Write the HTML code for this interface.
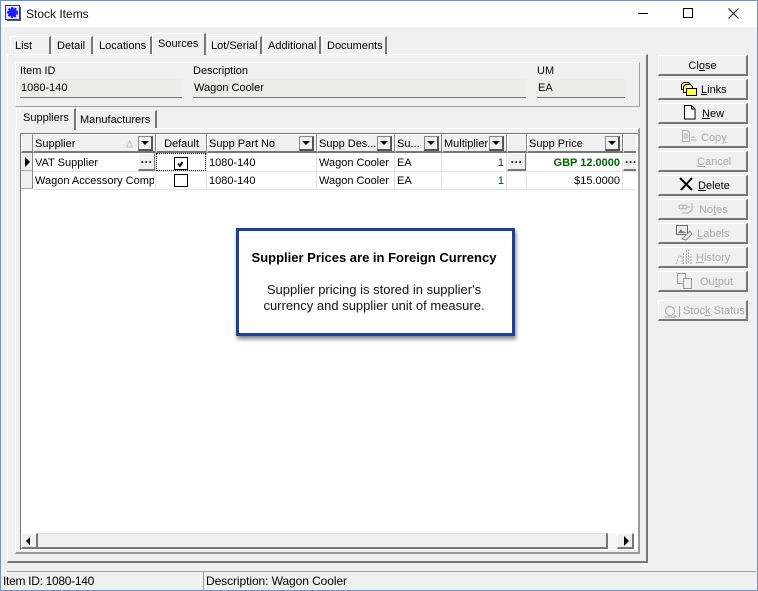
<!DOCTYPE html>
<html><head><meta charset="utf-8"><style>
html,body{margin:0;padding:0;background:#f0f0f0}
#w{position:relative;width:758px;height:591px;overflow:hidden;background:#f0f0f0;font:11px/14px "Liberation Sans",sans-serif;color:#000}
#w div,#w span.a,#w svg{position:absolute}
.t{white-space:nowrap}
.tab{background:#f0f0f0;border-top:1px solid #fff;border-left:1px solid #fff;border-right:2px solid #777;box-sizing:border-box;white-space:nowrap;line-height:19px}
.btn{left:658px;width:90px;height:21px;box-sizing:border-box;background:#f0f0f0;border-top:1px solid #fff;border-left:1px solid #fff;border-right:2px solid #777;border-bottom:2px solid #777;text-align:center;line-height:20px;white-space:nowrap}
.dis{color:#a8a8a8}
.hd{top:134px;height:19px;box-sizing:border-box;background:#f0f0f0;border-top:1px solid #fff;border-left:1px solid #fff;border-right:1px solid #888;border-bottom:2px solid #777;line-height:18px;padding-left:1px;white-space:nowrap;overflow:hidden}
.dd{top:136px;width:15px;height:15px;box-sizing:border-box;background:#f0f0f0;border:1px solid #888;border-right:2px solid #555;border-bottom:2px solid #555}
.dd:after{content:"";position:absolute;left:2px;top:4px;border-left:4px solid transparent;border-right:4px solid transparent;border-top:4px solid #000}
.c{height:18px;line-height:20px;white-space:nowrap;overflow:hidden}
.r{text-align:right}
.vl{width:1px;top:153px;height:36px;background:#e4e4e4}
.hl{left:33px;width:603px;height:1px;background:#e4e4e4}
.dots{width:19px;height:18px;box-sizing:border-box;background:#f0f0f0;border-right:1px solid #777;border-bottom:2px solid #777;border-top:1px solid #fff;border-left:1px solid #fff;text-align:center;font-weight:bold;line-height:10px;font-size:12px;letter-spacing:.6px}
u{text-decoration:underline}
</style></head><body><div id="w">

<div style="left:0;top:0;width:758px;height:27px;background:#fff"></div>
<div style="left:0;top:0;width:758px;height:1px;background:#6b95c8"></div>
<div style="left:0;top:0;width:1px;height:591px;background:#6b95c8"></div>
<div style="left:757px;top:0;width:1px;height:591px;background:#6b95c8"></div>
<div style="left:0;top:590px;width:758px;height:1px;background:#6b95c8"></div>

<svg style="left:5px;top:5px" width="16" height="16" viewBox="0 0 16 16"><rect x=".5" y=".5" width="14" height="14" fill="#e8ecff" stroke="#2a2ad0"/><path d="M15.500 2v13.500H2" stroke="#555" fill="none"/><circle cx="7.500" cy="7.500" r="4.500" fill="#1c1cff" stroke="#1c1cff" stroke-dasharray="2 1.300" stroke-width="2"/></svg>
<div class="t" style="left:26px;top:7px;font-size:12px;color:#111">Stock Items</div>
<div style="left:638px;top:13px;width:10px;height:1px;background:#000"></div>
<div style="left:683px;top:8px;width:10px;height:10px;box-sizing:border-box;border:1px solid #000"></div>
<svg style="left:728px;top:8px" width="11" height="11" viewBox="0 0 11 11"><path d="M.5.500l10 10M10.500.500l-10 10" stroke="#111" fill="none"/></svg>

<!-- main panel -->
<div style="left:7px;top:54px;width:641px;height:509px;box-sizing:border-box;border-top:1px solid #fff;border-left:1px solid #fff;border-right:2px solid #777;border-bottom:2px solid #777"></div>

<!-- top tabs -->
<div class="tab" style="left:10px;top:36px;width:41px;height:18px;padding-left:4px">List</div>
<div class="tab" style="left:53px;top:36px;width:40px;height:18px;padding-left:3px">Detail</div>
<div class="tab" style="left:94px;top:36px;width:58px;height:18px;padding-left:4px">Locations</div>
<div class="tab" style="left:152px;top:33px;width:54px;height:22px;line-height:20px;z-index:2;padding-left:5px">Sources</div>
<div class="tab" style="left:207px;top:36px;width:55px;height:18px;padding-left:3px">Lot/Serial</div>
<div class="tab" style="left:263px;top:36px;width:58px;height:18px;padding-left:4px">Additional</div>
<div class="tab" style="left:322px;top:36px;width:65px;height:18px;padding-left:4px">Documents</div>

<!-- header group -->
<div style="left:15px;top:62px;width:625px;height:45px;box-sizing:border-box;border:1px solid #fff;border-right:1px solid #a0a0a0;border-bottom:1px solid #a0a0a0"></div>
<div class="t" style="left:20px;top:64px">Item ID</div>
<div class="t" style="left:193px;top:64px">Description</div>
<div class="t" style="left:537px;top:64px">UM</div>
<div class="t" style="left:20px;top:79px;width:162px;height:19px;box-sizing:border-box;background:#ececea;border-bottom:1px solid #777;padding-left:1px;line-height:18px">1080-140</div>
<div class="t" style="left:193px;top:79px;width:333px;height:19px;box-sizing:border-box;background:#ececea;border-bottom:1px solid #777;padding-left:1px;line-height:18px">Wagon Cooler</div>
<div class="t" style="left:537px;top:79px;width:88px;height:19px;box-sizing:border-box;background:#ececea;border-bottom:1px solid #777;padding-left:1px;line-height:18px">EA</div>

<!-- inner panel -->
<div style="left:15px;top:128px;width:625px;height:426px;box-sizing:border-box;border-top:1px solid #fff;border-left:1px solid #fff;border-right:2px solid #999;border-bottom:2px solid #999"></div>
<div class="tab" style="left:16px;top:108px;width:60px;height:22px;line-height:19px;z-index:2;padding-left:6px">Suppliers</div>
<div class="tab" style="left:76px;top:110px;width:81px;height:18px;line-height:18px;padding-left:3px">Manufacturers</div>

<!-- grid -->
<div style="left:20px;top:133px;width:618px;height:417px;box-sizing:border-box;background:#fff;border-top:1px solid #777;border-left:1px solid #777"></div>
<div style="left:21px;top:134px;width:615px;height:19px;background:#f0f0f0"></div>

<div class="hd" style="left:21px;width:12px"></div>
<div class="hd" style="left:33px;width:123px">Supplier</div>
<div class="hd" style="left:156px;width:51px;text-align:center;padding:0">Default</div>
<div class="hd" style="left:207px;width:110px">Supp Part No</div>
<div class="hd" style="left:317px;width:78px">Supp Des...</div>
<div class="hd" style="left:395px;width:47px">Su...</div>
<div class="hd" style="left:442px;width:65px">Multiplier</div>
<div class="hd" style="left:507px;width:20px"></div>
<div class="hd" style="left:527px;width:96px">Supp Price</div>
<div class="hd" style="left:623px;width:13px;border-right:0"></div>
<svg style="left:126px;top:140px" width="7" height="8" viewBox="0 0 7 8"><path d="M3.500 1L.5 7h6z" fill="none" stroke="#c4c4c4"/></svg>
<div class="dd" style="left:138px"></div>
<div class="dd" style="left:299px"></div>
<div class="dd" style="left:377px"></div>
<div class="dd" style="left:424px"></div>
<div class="dd" style="left:489px"></div>
<div class="dd" style="left:605px"></div>

<!-- row grid -->
<div class="hl" style="top:171px"></div>
<div class="hl" style="top:189px"></div>
<div class="vl" style="left:155px"></div>
<div class="vl" style="left:206px"></div>
<div class="vl" style="left:316px"></div>
<div class="vl" style="left:394px"></div>
<div class="vl" style="left:441px"></div>
<div class="vl" style="left:506px"></div>
<div class="vl" style="left:526px"></div>
<div class="vl" style="left:622px"></div>

<div style="left:21px;top:153px;width:12px;height:18px;box-sizing:border-box;background:#f0f0f0;border-right:1px solid #888;border-bottom:1px solid #aaa"></div>
<div style="left:21px;top:171px;width:12px;height:18px;box-sizing:border-box;background:#f0f0f0;border-right:1px solid #888;border-bottom:1px solid #aaa"></div>
<div style="left:25px;top:157px;width:0;height:0;border-left:5px solid #000;border-top:5px solid transparent;border-bottom:5px solid transparent"></div>

<div class="c" style="left:35px;top:153px;width:104px">VAT Supplier</div>
<div class="dots" style="left:138px;top:153px;width:17px">...</div>
<div class="c" style="left:35px;top:171px;width:119px">Wagon Accessory Company</div>

<div style="left:156px;top:153px;width:50px;height:18px;box-sizing:border-box;border:1px dotted #000"></div>
<div style="left:174px;top:157px;width:14px;height:13px;box-sizing:border-box;border:1px solid #000;background:#fff"></div>
<svg style="left:175px;top:158px" width="12" height="11" viewBox="0 0 12 11"><path d="M3 5.500l2 2.500 2.500-4" stroke="#000" stroke-width="1.800" fill="none"/></svg>
<div style="left:174px;top:174px;width:14px;height:13px;box-sizing:border-box;border:1px solid #000;background:#fff"></div>

<div class="c" style="left:209px;top:153px">1080-140</div>
<div class="c" style="left:209px;top:171px">1080-140</div>
<div class="c" style="left:319px;top:153px">Wagon Cooler</div>
<div class="c" style="left:319px;top:171px">Wagon Cooler</div>
<div class="c" style="left:397px;top:153px">EA</div>
<div class="c" style="left:397px;top:171px">EA</div>
<div class="c r" style="left:442px;top:153px;width:62px;color:#004400">1</div>
<div class="c r" style="left:442px;top:171px;width:62px;color:#004400">1</div>
<div class="dots" style="left:507px;top:153px">...</div>
<div class="c r" style="left:527px;top:153px;width:93px;color:#006400;font-weight:bold">GBP 12.0000</div>
<div class="c r" style="left:527px;top:171px;width:93px">$15.0000</div>
<div class="dots" style="left:623px;top:153px;width:13px;text-align:left;padding-left:1px;border-right:0;overflow:hidden">...</div>

<!-- scrollbar -->
<div style="left:21px;top:533px;width:17px;height:16px;box-sizing:border-box;background:#f0f0f0;border-top:1px solid #fff;border-left:1px solid #fff;border-right:2px solid #777;border-bottom:2px solid #777"></div>
<div style="left:26px;top:537px;width:0;height:0;border-right:4px solid #000;border-top:4px solid transparent;border-bottom:4px solid transparent"></div>
<div style="left:38px;top:533px;width:570px;height:16px;box-sizing:border-box;background:#f0f0f0;border-top:1px solid #e2e2e2;border-right:2px solid #777;border-bottom:2px solid #777"></div>
<div style="left:608px;top:533px;width:9px;height:16px;background:#f6f6f6"></div>
<div style="left:617px;top:533px;width:17px;height:16px;box-sizing:border-box;background:#f0f0f0;border-top:1px solid #fff;border-left:1px solid #fff;border-right:2px solid #777;border-bottom:2px solid #777"></div>
<div style="left:624px;top:536px;width:0;height:0;border-left:5px solid #000;border-top:5px solid transparent;border-bottom:5px solid transparent"></div>

<!-- callout -->
<div style="left:236px;top:228px;width:279px;height:108px;box-sizing:border-box;background:#fff;border:3px solid #1f3f97;box-shadow:1px 3px 4px rgba(0,0,0,.5);z-index:3;text-align:center;font-size:13px;line-height:16px;color:#111">
<span class="a" style="left:0;right:3px;top:19px;font-weight:bold;color:#000">Supplier Prices are in Foreign Currency</span>
<span class="a" style="left:0;right:3px;top:51px">Supplier pricing is stored in supplier's<br>currency and supplier unit of measure.</span>
</div>

<!-- buttons -->
<div class="btn" style="top:55px">Cl<u>o</u>se</div>
<div class="btn" style="top:79px;text-align:left;padding-left:42px"><u>L</u>inks</div>
<svg style="left:680px;top:81px" width="18" height="16" viewBox="0 0 18 16"><path d="M1.500 3.500l2-2h5l2 2v5h-9z" fill="#ffff90" stroke="#000"/><path d="M3.500 5.500l2-2h5l2 2v6h-9z" fill="#ffff90" stroke="#000"/><path d="M6.500 7.500h10v7h-10z" fill="#ffff40" stroke="#000"/></svg>
<div class="btn" style="top:103px;text-align:left;padding-left:43px"><u>N</u>ew</div>
<svg style="left:684px;top:105px" width="12" height="15" viewBox="0 0 12 15"><path d="M.5.500h7l3.500 3.500v10H.5z" fill="#fff" stroke="#000"/><path d="M7.500.500v3.500H11" fill="none" stroke="#000"/></svg>
<div class="btn dis" style="top:127px;text-align:left;padding-left:42px">Cop<u>y</u></div>
<svg style="left:682px;top:130px" width="16" height="13" viewBox="0 0 16 13"><path d="M.5.500h5l2 2v9h-7zM2 4h4M2 6h4M2 8h4M9 7h4M9 10h6" fill="none" stroke="#aaa"/></svg>
<div class="btn dis" style="top:151px;text-align:left;padding-left:38px"><u>C</u>ancel</div>
<div class="btn" style="top:175px;text-align:left;padding-left:39px"><u>D</u>elete</div>
<svg style="left:679px;top:177px" width="15" height="14" viewBox="0 0 15 14"><path d="M1 1l12 12M13 1L2 13" stroke="#000" stroke-width="2" fill="none"/></svg>
<div class="btn dis" style="top:199px;text-align:left;padding-left:40px">No<u>t</u>es</div>
<svg style="left:678px;top:202px" width="17" height="14" viewBox="0 0 17 14"><path d="M1 5a2 2 0 1 1 4 0a2 2 0 1 1-4 0M5 5a2 2 0 1 1 4 0a2 2 0 1 1-4 0M9 5h3M14 1v7l-4 3H4" fill="none" stroke="#aaa"/></svg>
<div class="btn dis" style="top:223px;text-align:left;padding-left:38px"><u>L</u>abels</div>
<svg style="left:676px;top:225px" width="17" height="16" viewBox="0 0 17 16"><path d="M.5.500h11v9H.5z" fill="#eee" stroke="#666"/><path d="M2 8l3-4 2 3 1-1 2 2z" fill="#777"/><path d="M6 14l8-8 2 3-6 6z" fill="#eee" stroke="#888"/></svg>
<div class="btn dis" style="top:247px;text-align:left;padding-left:37px"><u>H</u>istory</div>
<svg style="left:675px;top:249px" width="18" height="16" viewBox="0 0 18 16"><path d="M1 15l3-8h3v8M8.500 15V4M11.500 15V1h2v14M16 15V5" fill="none" stroke="#aaa" stroke-dasharray="2 1"/></svg>
<div class="btn dis" style="top:271px;text-align:left;padding-left:41px">Ou<u>t</u>put</div>
<svg style="left:677px;top:273px" width="15" height="16" viewBox="0 0 15 16"><path d="M.5.500h8v10h-8z" fill="#f0f0f0" stroke="#999"/><path d="M6.500 5.500h8v10h-8z" fill="#f0f0f0" stroke="#999"/></svg>
<div class="btn dis" style="top:300px;text-align:left;padding-left:24px">Stoc<u>k</u> Status</div>
<svg style="left:663px;top:303px" width="18" height="15" viewBox="0 0 18 15"><circle cx="7" cy="8" r="4.500" fill="none" stroke="#aaa"/><path d="M2 14h10M11 12l3 2M16.500 3v11M6 2v2" stroke="#aaa" fill="none"/></svg>

<!-- status bar -->
<div style="left:7px;top:571px;width:749px;height:1px;background:#a0a0a0"></div>
<div style="left:1px;top:572px;width:756px;height:18px;background:#f0f0f0"></div>
<div class="t" style="left:3px;top:574px;font-size:12px;letter-spacing:-.3px">Item ID: 1080-140</div>
<div style="left:200px;top:572px;width:1px;height:18px;background:#fff"></div>
<div style="left:203px;top:572px;width:1px;height:18px;background:#a0a0a0"></div>
<div class="t" style="left:206px;top:574px;font-size:12px;letter-spacing:-.08px">Description: Wagon Cooler</div>
</div></body></html>
